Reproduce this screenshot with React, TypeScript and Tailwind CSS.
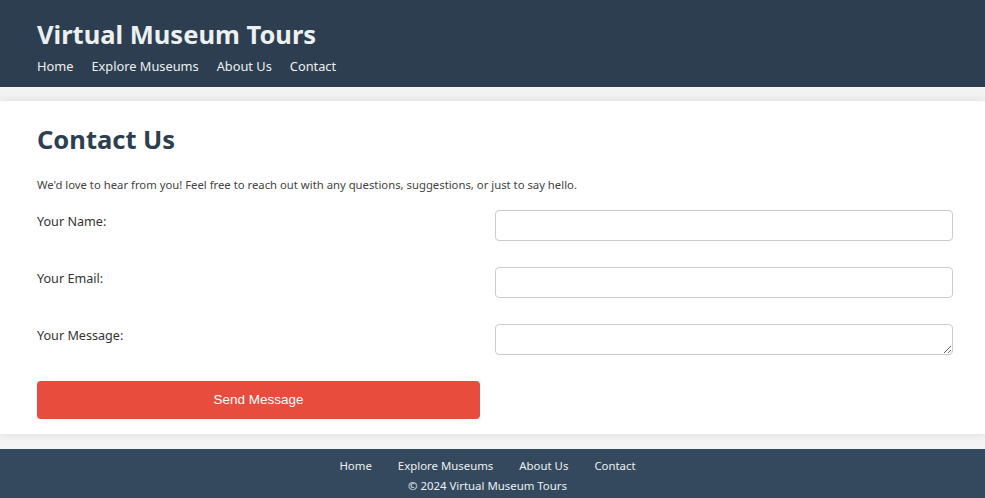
import React from "react";

const font = { fontFamily: '"Segoe UI", "Noto Sans", sans-serif' };

export default function App() {
  const links = ["Home", "Explore Museums", "About Us", "Contact"];
  return (
    <div className="min-h-[498px] bg-[#f4f4f4] text-[#333]" style={font}>
      <header className="bg-[#2c3e50] px-[37px] pt-[18px] pb-[11px] text-[#ecf0f1]">
        <h1 className="text-[25.5px] font-bold leading-[32px]">Virtual Museum Tours</h1>
        <nav className="mt-[6px] flex gap-[18px] text-[12.8px] leading-[20px]">
          {links.map((l) => (
            <a key={l} className="text-[#ecf0f1]">{l}</a>
          ))}
        </nav>
      </header>
      <main className="mt-[14px] bg-white px-[37px] pt-[22px] pb-[15px] shadow-[0_0_10px_rgba(0,0,0,0.1)]">
        <h2 className="text-[25.5px] font-bold leading-[32px] text-[#2c3e50]">Contact Us</h2>
        <p className="mt-[22px] text-[11.3px] leading-[16px] text-[#444]">
          We'd love to hear from you! Feel free to reach out with any questions, suggestions, or just to say hello.
        </p>
        <form className="mt-[17px] grid grid-cols-[458px_458px] gap-y-[26px]" onSubmit={(e) => e.preventDefault()}>
          <label className="pt-[3px] text-[12.6px] leading-[18px] text-[#333]">Your Name:</label>
          <input className="h-[31px] rounded-[4px] border border-[#ccc] px-2" />
          <label className="pt-[3px] text-[12.6px] leading-[18px] text-[#333]">Your Email:</label>
          <input className="h-[31px] rounded-[4px] border border-[#ccc] px-2" />
          <label className="pt-[3px] text-[12.6px] leading-[18px] text-[#333]">Your Message:</label>
          <textarea className="block h-[31px] min-h-[31px] rounded-[4px] border border-[#ccc] px-2" />
        </form>
        <button
          className="mt-[26px] block h-[38px] w-[443px] rounded-[4px] bg-[#e74c3c] text-[13.5px] text-white"
          style={{ fontFamily: '"Liberation Sans", Arial, sans-serif' }}
        >
          Send Message
        </button>
      </main>
      <footer className="mt-[15px] bg-[#34495e] pt-[7px] pr-[10px] pb-[3px] text-center text-[11.4px] leading-[20px] text-[#ecf0f1]">
        <div className="flex justify-center gap-[26px]">
          {links.map((l) => (
            <a key={l}>{l}</a>
          ))}
        </div>
        <div>© 2024 Virtual Museum Tours</div>
      </footer>
    </div>
  );
}
